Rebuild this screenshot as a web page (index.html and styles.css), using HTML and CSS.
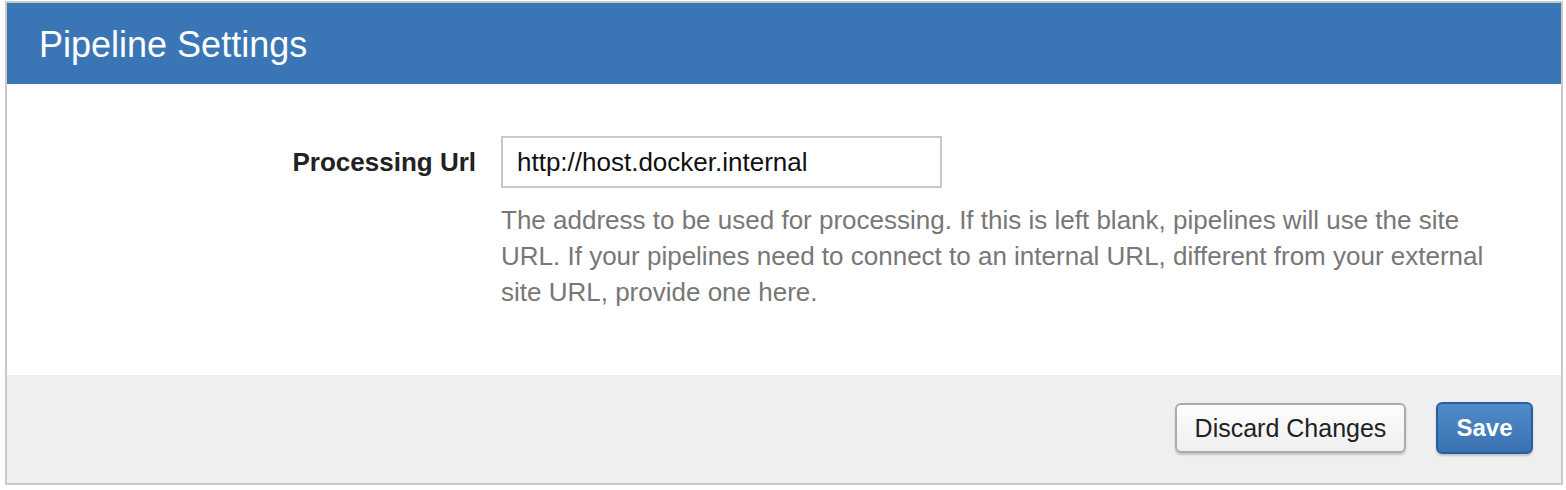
FILE: index.html
```html
<!DOCTYPE html>
<html>
<head>
<meta charset="utf-8">
<link rel="stylesheet" href="styles.css">
</head>
<body>
<div class="panel">
  <div class="panel-header">
    <h1 class="panel-title">Pipeline Settings</h1>
  </div>
  <div class="panel-body">
    <div class="field">
      <label class="field-label" for="purl">Processing Url</label>
      <div class="field-control">
        <input class="text-input" id="purl" type="text" value="http://host.docker.internal">
        <p class="help">The address to be used for processing. If this is left blank, pipelines will use the site URL. If your pipelines need to connect to an internal URL, different from your external site URL, provide one here.</p>
      </div>
    </div>
  </div>
  <div class="panel-footer">
    <button class="btn btn-default" type="button">Discard Changes</button>
    <button class="btn btn-primary" type="button">Save</button>
  </div>
</div>
</body>
</html>
```
FILE: styles.css
```css
html, body {
  margin: 0;
  background: #ffffff;
}
body {
  padding: 1px 3px 0 5px;
  font-family: "Liberation Sans", Arial, Helvetica, sans-serif;
}
.panel {
  width: 1558px;
  box-sizing: border-box;
  border: 2px solid #c9c9c9;
  background: #ffffff;
}
.panel-header {
  background: #3a75b6;
  height: 81px;
  padding: 0 32px;
  display: flex;
  align-items: center;
}
.panel-title {
  margin: 0;
  font-weight: normal;
  font-size: 36px;
  line-height: 40px;
  color: #ffffff;
  position: relative;
  top: 1px;
}
.panel-body {
  height: 291px;
  box-sizing: border-box;
  padding-top: 52px;
}
.field {
  display: grid;
  grid-template-columns: 469px 1fr;
  column-gap: 25px;
}
.field-label {
  text-align: right;
  font-weight: bold;
  font-size: 26px;
  line-height: 52px;
  color: #222222;
}
.field-control {
  display: flex;
  flex-direction: column;
  align-items: flex-start;
}
.text-input {
  width: 441px;
  height: 52px;
  box-sizing: border-box;
  border: 2px solid #c8c8c8;
  border-radius: 0;
  padding: 0 14px;
  margin: 0;
  font-family: "Liberation Sans", Arial, Helvetica, sans-serif;
  font-size: 26px;
  color: #111111;
  background: #ffffff;
  outline: none;
}
.help {
  margin: 14px 0 0;
  width: 995px;
  font-size: 26px;
  line-height: 36px;
  color: #777777;
}
.panel-footer {
  background: #efefef;
  height: 108px;
  box-sizing: border-box;
  padding: 0 28px 2px;
  display: flex;
  align-items: center;
  justify-content: flex-end;
  gap: 30px;
}
.btn {
  height: 50px;
  box-sizing: border-box;
  border-radius: 6px;
  font-family: "Liberation Sans", Arial, Helvetica, sans-serif;
  font-size: 25px;
  padding: 0;
  margin: 0;
  white-space: nowrap;
  text-align: center;
  cursor: pointer;
  box-shadow: 0 2px 2px rgba(0, 0, 0, 0.18);
}
.btn-default {
  width: 231px;
  border: 2px solid #ababab;
  background: linear-gradient(#fdfdfd, #efefef);
  color: #222222;
}
.btn-primary {
  width: 97px;
  height: 52px;
  border: 2px solid #2b5e9b;
  background: linear-gradient(#4f8cc8, #3a71b1);
  color: #ffffff;
  font-weight: bold;
  font-size: 24px;
}
```
